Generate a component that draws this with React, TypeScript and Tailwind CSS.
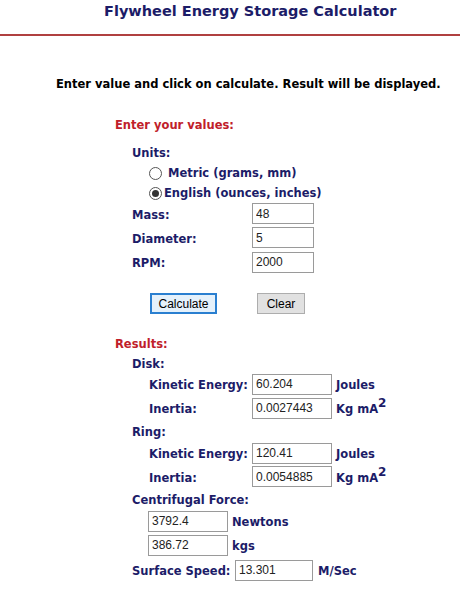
import React from "react";

const navy = "text-[#1c1c68]";

function Field({ value, w = "w-[62px]" }: { value: string; w?: string }) {
  return (
    <input
      readOnly
      value={value}
      className={`h-[21px] ${w} border border-[#9a9a9a] bg-white px-[3px] text-[12px] font-normal text-[#222] outline-none font-['Liberation_Sans',Arial,sans-serif]`}
    />
  );
}

function Radio({ checked }: { checked?: boolean }) {
  return (
    <span className="flex h-[13px] w-[13px] items-center justify-center rounded-full border border-[#555] bg-white">
      {checked && <span className="h-[7px] w-[7px] rounded-full bg-[#333]" />}
    </span>
  );
}

// labels sit a bit lower than the field centre
function Label({ children, w }: { children: React.ReactNode; w?: string }) {
  return <span className={`pt-[4px] ${w ?? ""}`}>{children}</span>;
}

export default function App() {
  return (
    <div className="w-[460px] h-[600px] bg-white font-['DejaVu_Sans',Verdana,sans-serif] font-bold text-[11.5px]">
      {/* Header */}
      <div className="h-[34px] pl-[104px] pt-[1px]">
        <h1 className={`text-[14.5px] leading-[20px] font-bold ${navy}`}>
          Flywheel Energy Storage Calculator
        </h1>
      </div>
      <div className="h-[2px] bg-[#b04040]" />

      <p className="mt-[40px] h-[16px] pl-[56px] leading-[16px] text-black">
        Enter value and click on calculate. Result will be displayed.
      </p>

      {/* Inputs */}
      <div className="mt-[22px] flex flex-col">
        <div className="flex h-[20px] items-center pl-[115px] pt-[4px] text-[#c0202a]">Enter your values:</div>
        <div className={`mt-[8px] flex h-[20px] items-center pl-[132px] pt-[4px] ${navy}`}>Units:</div>
        <div className={`flex h-[20px] items-center gap-[6px] pl-[149px] pt-[3px] ${navy}`}>
          <Radio />
          <span>Metric (grams, mm)</span>
        </div>
        <div className={`flex h-[20px] items-center gap-[2px] pl-[149px] pt-[3px] ${navy}`}>
          <Radio checked />
          <span>English (ounces, inches)</span>
        </div>
        <div className={`flex h-[23px] items-center pl-[132px] ${navy}`}>
          <Label w="w-[120px]">Mass:</Label>
          <Field value="48" />
        </div>
        <div className={`flex h-[25px] items-center pl-[132px] ${navy}`}>
          <Label w="w-[120px]">Diameter:</Label>
          <Field value="5" />
        </div>
        <div className={`flex h-[24px] items-center pl-[132px] ${navy}`}>
          <Label w="w-[120px]">RPM:</Label>
          <Field value="2000" />
        </div>

        <div className="mt-[19px] flex h-[21px] items-stretch pl-[150px] font-['Liberation_Sans',Arial,sans-serif] text-[12px] font-normal text-black">
          <button className="w-[67px] border-2 border-[#2a7fd0] bg-[#e5f1fb]">Calculate</button>
          <button className="ml-[40px] w-[48px] border border-[#adadad] bg-[#e1e1e1]">Clear</button>
        </div>

        {/* Results */}
        <div className="mt-[19px] flex h-[20px] items-center pl-[115px] pt-[4px] text-[#c0202a]">Results:</div>
        <div className={`flex h-[19px] items-center pl-[132px] pt-[4px] ${navy}`}>Disk:</div>
        <div className={`flex h-[24px] items-center pl-[149px] ${navy}`}>
          <Label w="w-[103px]">Kinetic Energy:</Label>
          <Field value="60.204" w="w-[80px]" />
          <Label>
            <span className="ml-[4px]">Joules</span>
          </Label>
        </div>
        <div className={`flex h-[24px] items-center pl-[149px] ${navy}`}>
          <Label w="w-[103px]">Inertia:</Label>
          <Field value="0.0027443" w="w-[80px]" />
          <Label>
            <span className="ml-[4px]">
              Kg mA<sup className="text-[12px]">2</sup>
            </span>
          </Label>
        </div>
        <div className={`flex h-[22px] items-center pl-[132px] pt-[4px] ${navy}`}>Ring:</div>
        <div className={`flex h-[22px] items-center pl-[149px] ${navy}`}>
          <Label w="w-[103px]">Kinetic Energy:</Label>
          <Field value="120.41" w="w-[80px]" />
          <Label>
            <span className="ml-[4px]">Joules</span>
          </Label>
        </div>
        <div className={`flex h-[25px] items-center pl-[149px] ${navy}`}>
          <Label w="w-[103px]">Inertia:</Label>
          <Field value="0.0054885" w="w-[80px]" />
          <Label>
            <span className="ml-[4px]">
              Kg mA<sup className="text-[12px]">2</sup>
            </span>
          </Label>
        </div>
        <div className={`flex h-[20px] items-center pl-[132px] pt-[4px] ${navy}`}>Centrifugal Force:</div>
        <div className={`flex h-[24px] items-center pl-[148px] ${navy}`}>
          <Field value="3792.4" w="w-[80px]" />
          <Label>
            <span className="ml-[4px]">Newtons</span>
          </Label>
        </div>
        <div className={`flex h-[24px] items-center pl-[148px] ${navy}`}>
          <Field value="386.72" w="w-[80px]" />
          <Label>
            <span className="ml-[4px]">kgs</span>
          </Label>
        </div>
        <div className={`flex h-[26px] items-center pl-[132px] ${navy}`}>
          <Label w="w-[103px]">Surface Speed:</Label>
          <Field value="13.301" w="w-[78px]" />
          <Label>
            <span className="ml-[5px]">M/Sec</span>
          </Label>
        </div>
      </div>
    </div>
  );
}
